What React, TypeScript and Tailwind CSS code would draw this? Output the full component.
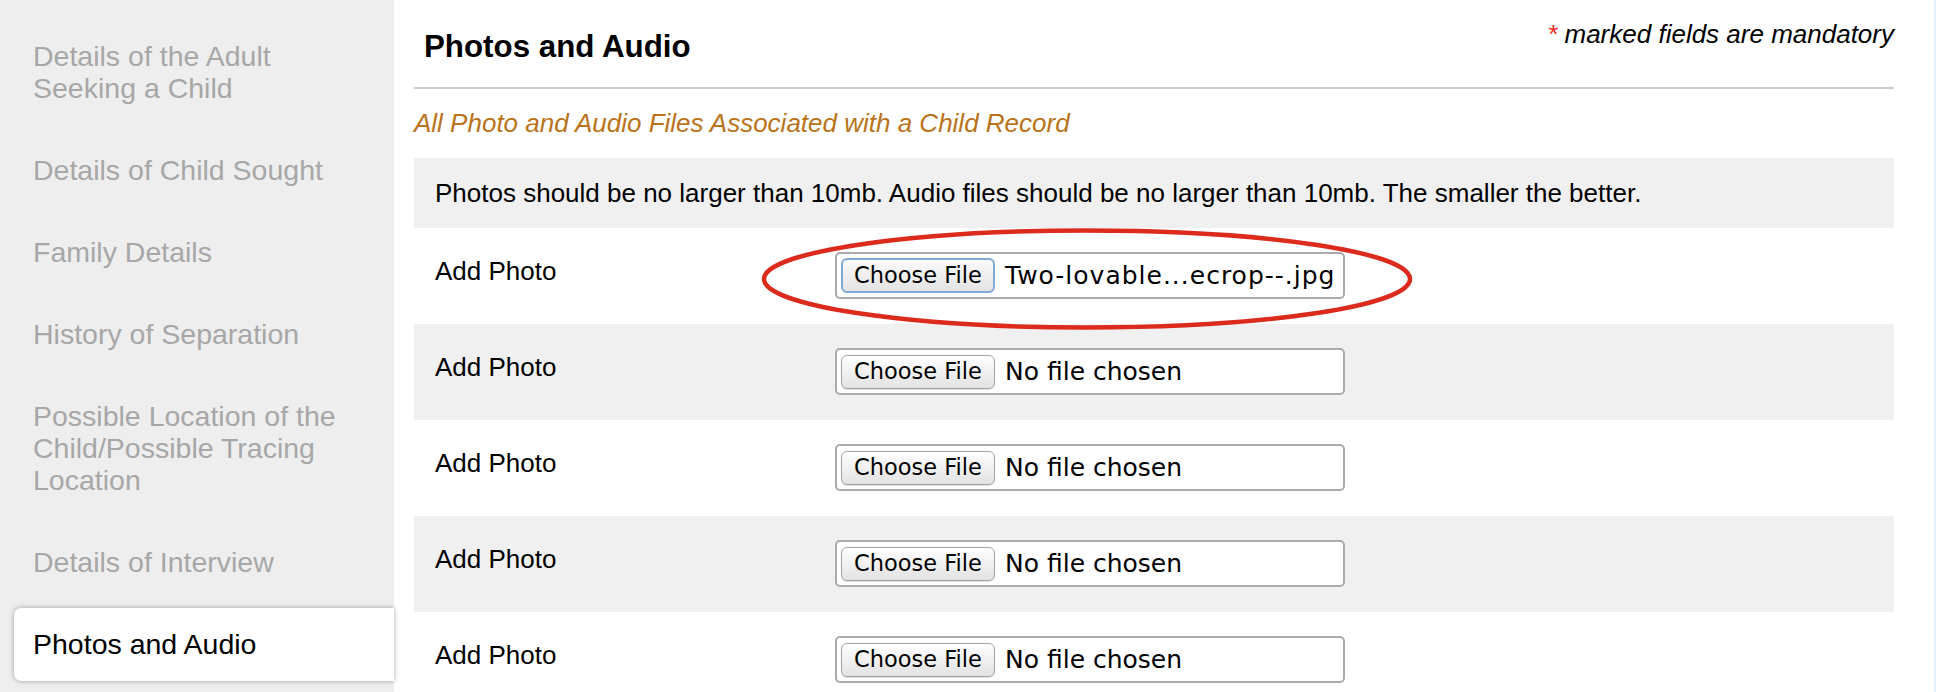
const navItems = [
  { lines: ['Details of the Adult', 'Seeking a Child'] },
  { lines: ['Details of Child Sought'] },
  { lines: ['Family Details'] },
  { lines: ['History of Separation'] },
  { lines: ['Possible Location of the', 'Child/Possible Tracing', 'Location'] },
  { lines: ['Details of Interview'] },
  { lines: ['Photos and Audio'], active: true },
];

const photoRows = [
  { file: 'Two-lovable...ecrop--.jpg', focused: true },
  { file: 'No file chosen' },
  { file: 'No file chosen' },
  { file: 'No file chosen' },
  { file: 'No file chosen' },
];

const FilePicker = ({ file, focused }: { file: string; focused?: boolean }) => (
  <div className="mt-[24px] flex h-[47px] w-[510px] items-center rounded-[5px] border-2 border-[#ababab] bg-white pl-[4px] font-['DejaVu_Sans',sans-serif]">
    <div
      className={
        focused
          ? 'flex h-[35px] w-[154px] items-center justify-center rounded-[6px] border-2 border-[#80a9d8] bg-linear-to-b from-[#fbfbfb] to-[#e3e3e3] text-[22.5px] text-black'
          : 'flex h-[34px] w-[154px] items-center justify-center rounded-[6px] border border-[#a3a3a3] bg-linear-to-b from-white to-[#e2e2e2] text-[22.5px] text-black shadow-[0_1px_1px_rgba(0,0,0,0.12)]'
      }
    >
      Choose File
    </div>
    <span className={focused ? 'ml-[10px] text-[25px] leading-none tracking-[1px] text-black' : 'ml-[10px] text-[25px] leading-none text-black'}>
      {file}
    </span>
  </div>
);

export default function App() {
  return (
    <div className="relative flex h-[692px] w-[1936px] overflow-hidden bg-white font-['Liberation_Sans',Arial,sans-serif] text-black">
      {/* left navigation */}
      <aside className="w-[394px] shrink-0 bg-[#eeeeee] pt-[20px]">
        {navItems.map((item, i) => (
          <div
            key={i}
            className={
              item.active
                ? 'mb-[9px] ml-[14px] rounded-l-[7px] bg-white pb-[21px] pl-[19px] pt-[20px] text-[28.5px] leading-[32px] text-black shadow-[0_0_5px_rgba(0,0,0,0.35)]'
                : 'mb-[9px] ml-[14px] pb-[21px] pl-[19px] pt-[20px] text-[28.5px] leading-[32px] text-[#a7a7a7]'
            }
          >
            {item.lines.map((l) => (
              <div key={l}>{l}</div>
            ))}
          </div>
        ))}
      </aside>

      {/* form */}
      <main className="flex-1 pl-[20px]">
        <div className="w-[1480px]">
          <div className="flex h-[87px] items-start justify-between">
            <h2 className="ml-[10px] mt-[29px] text-[31.3px] font-bold leading-[36px]">Photos and Audio</h2>
            <p className="mt-[19px] text-[26px] italic leading-[30px]">
              <span className="text-[#ee2a24]">*</span> marked fields are mandatory
            </p>
          </div>
          <div className="h-[2px] bg-[#cdcdcd]" />
          <p className="mt-[19px] text-[26px] italic leading-[30px] text-[#b9731b]">
            All Photo and Audio Files Associated with a Child Record
          </p>
          <div className="mt-[20px] h-[70px] bg-[#f0f0f0] pl-[21px] pt-[20px] text-[26px] leading-[30px]">
            Photos should be no larger than 10mb. Audio files should be no larger than 10mb. The smaller the better.
          </div>
          {photoRows.map((row, i) => (
            <div key={i} className={i % 2 ? 'flex h-[96px] bg-[#f0f0f0] pl-[21px]' : 'flex h-[96px] bg-white pl-[21px]'}>
              <div className="w-[400px] pt-[28px] text-[26px] leading-[30px]">Add Photo</div>
              <FilePicker file={row.file} focused={row.focused} />
            </div>
          ))}
        </div>
      </main>

      <div className="w-[2px] shrink-0 bg-[#e4f0fa]" />

      {/* red annotation round the chosen file */}
      <svg className="pointer-events-none absolute left-[760px] top-[227px]" width="654" height="106" viewBox="0 0 654 106">
        <ellipse cx="327" cy="52" rx="323" ry="48.5" fill="none" stroke="#dc2b1d" strokeWidth="4.5" />
      </svg>
    </div>
  );
}
